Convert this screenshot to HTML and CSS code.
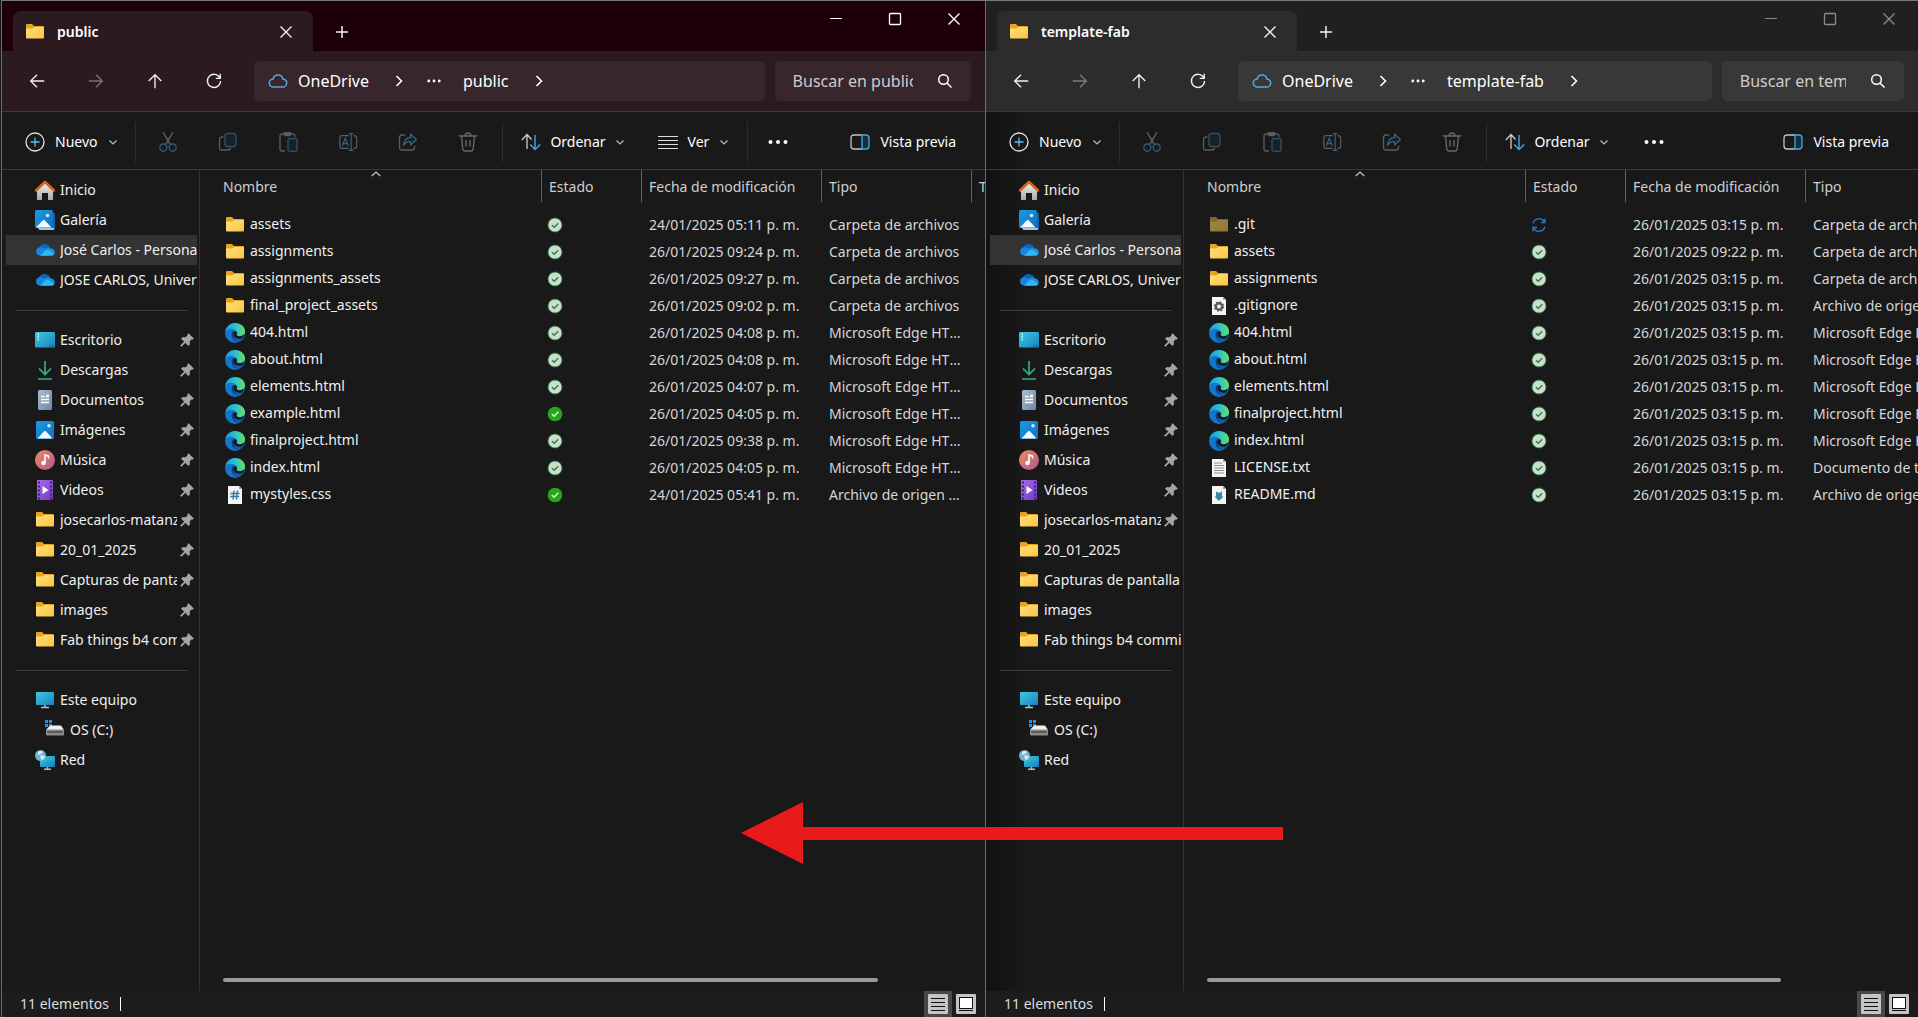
FILE: index.html
```
<!DOCTYPE html>
<html lang="es">
<head>
<meta charset="utf-8">
<title>Explorador de archivos</title>
<link rel="stylesheet" href="styles.css">
</head>
<body>
<svg class="sprite" width="0" height="0" aria-hidden="true">
<defs>
<linearGradient id="gFolder" x1="0" y1="0" x2="1" y2="1"><stop offset="0" stop-color="#ffe083"/><stop offset="1" stop-color="#fbc53c"/></linearGradient>
<linearGradient id="gBlue" x1="0" y1="0" x2="1" y2="1"><stop offset="0" stop-color="#1a9be0"/><stop offset="1" stop-color="#0d6fc4"/></linearGradient>
<linearGradient id="gDesk" x1="0" y1="0" x2="1" y2="1"><stop offset="0" stop-color="#3ccbe0"/><stop offset="1" stop-color="#1a7fc0"/></linearGradient>
<linearGradient id="gMusic" x1="0" y1="0" x2="1" y2="1"><stop offset="0" stop-color="#f08a5c"/><stop offset="1" stop-color="#b05a90"/></linearGradient>
<linearGradient id="gHome" x1="0" y1="0" x2="0" y2="1"><stop offset="0" stop-color="#f2f2f2"/><stop offset="1" stop-color="#a8a8a8"/></linearGradient>
<linearGradient id="gDoc" x1="0" y1="0" x2="1" y2="1"><stop offset="0" stop-color="#a9bdd2"/><stop offset="1" stop-color="#6f86a4"/></linearGradient>
<linearGradient id="gEdge" x1="0" y1="0" x2="1" y2="0"><stop offset="0" stop-color="#1b9de0"/><stop offset=".55" stop-color="#2fc4c8"/><stop offset="1" stop-color="#6be05a"/></linearGradient>
<linearGradient id="gVideo" x1="0" y1="0" x2="1" y2="1"><stop offset="0" stop-color="#a96bea"/><stop offset="1" stop-color="#6f3cc0"/></linearGradient>
</defs>
<symbol id="folder" viewBox="0 0 20 20"><path d="M1 3q0-1 1-1h5l2 2h9q1 0 1 1v3H1z" fill="#e8a41c"/><path d="M1 6.500h6.500L9.500 5H19v10.500q0 1-1 1H2q-1 0-1-1z" fill="url(#gFolder)"/></symbol>
<symbol id="home" viewBox="0 0 20 20"><path d="M2 9.500L10 2l8 7.500V20h-5v-7H7v7H2z" fill="url(#gHome)"/><path d="M1 10.500L10 2l9 8.500" fill="none" stroke="#d9641f" stroke-width="2.600" stroke-linejoin="round" stroke-linecap="round"/></symbol>
<symbol id="gallery" viewBox="0 0 20 20"><path d="M4 3h15q1 0 1 1v15q0 1-1 1H4z" fill="#1c5f9e"/><path d="M3 18h16v1q0 1-1 1H5q-1 0-2-2z" fill="#9fc7e6"/><rect width="18" height="18" rx="1.500" fill="url(#gBlue)"/><path d="M1 17.500l6.500-7q1.200-1 2.400 0l6.600 7z" fill="#f3f9ff"/><circle cx="12.500" cy="5.500" r="1.800" fill="#cfeaff"/></symbol>
<symbol id="onedrive" viewBox="0 0 20 20"><path d="M3.500 9C4.500 5 8 3.500 11 4.200c2 .4 3.500 1.700 4.200 3.500L10 13z" fill="#0f63b8"/><path d="M4.500 15.500A4.200 4.200 0 0 1 4.300 7.300c2.300-.3 4.200.7 5.700 2.200l5 6z" fill="#1686d9"/><path d="M8 10.500c2-3 5.500-3.700 7.600-2.300 2.600.3 4.200 2 4.200 4 0 1-.3 1.800-.8 2.300z" fill="#1490df"/><path d="M5 15.800l4.300-4.500c2-1.700 4.700-1.500 6.500 0l3.500 2.700c-.6 1.200-1.700 1.800-3 1.800z" fill="#35b4f2"/></symbol>
<symbol id="desktop" viewBox="0 0 20 20"><rect y="2" width="20" height="15.500" rx="1.200" fill="url(#gDesk)"/><path d="M2.500 4.500h1.500M2.500 7h1.500M2.500 9.500h1.500" stroke="#d7f6ff" stroke-width="1.300"/><path d="M14 16h1.500M17 16h1.500" stroke="#0b4a80"/></symbol>
<symbol id="download" viewBox="0 0 20 20"><path d="M10 1v13M4 8.500l6 6 6-6M3 19h14" fill="none" stroke="#2fb08a" stroke-width="1.700"/></symbol>
<symbol id="document" viewBox="0 0 20 20"><rect x="3" width="14" height="20" rx="1.500" fill="url(#gDoc)"/><path d="M6 6.500h4M6 9.500h8M6 12.500h8" stroke="#fff" stroke-width="1.500"/><path d="M11 4.500h3v3h-3z" fill="#eef4fa"/></symbol>
<symbol id="image" viewBox="0 0 20 20"><rect x="1" y="1" width="18" height="18" rx="1.500" fill="url(#gBlue)"/><path d="M2.500 18.500l6.300-7q1.200-1 2.400 0l6.300 7z" fill="#f3f9ff"/><circle cx="14" cy="5.800" r="1.700" fill="#cfeaff"/></symbol>
<symbol id="music" viewBox="0 0 20 20"><circle cx="10" cy="10" r="10" fill="url(#gMusic)"/><circle cx="8.500" cy="13" r="2.200" fill="#fff"/><path d="M10 13V5l3.500 1v2.500" fill="none" stroke="#fff" stroke-width="1.600"/></symbol>
<symbol id="video" viewBox="0 0 20 20"><rect x="2" width="16" height="20" rx="1" fill="url(#gVideo)"/><path d="M4 1.500v18M16 1.500v18" stroke="#3a1a78" stroke-width="1.800" stroke-dasharray="2 2"/><path d="M7.500 6v8l6-4z" fill="#fff"/></symbol>
<symbol id="pc" viewBox="0 0 20 20"><rect x="1" y="2" width="18" height="13" rx="1" fill="url(#gDesk)"/><path d="M10 15v2M6 17.500h8" stroke="#a9c3d6" stroke-width="1.500"/></symbol>
<symbol id="drive" viewBox="0 0 20 20"><path d="M0 0h3v3H0zM4 0h3v3H4zM0 4h3v3H0zM4 4h3v3H4z" fill="#2f8fd8"/><path d="M5 5.500h11l3 4.500H1z" fill="#f0f0f0"/><rect x="1" y="9.500" width="18" height="6" rx="1" fill="#8a8a8a"/><path d="M2.500 12h15" stroke="#4a4a4a" stroke-width="1.500"/></symbol>
<symbol id="network" viewBox="0 0 20 20"><rect x="5" y="6" width="15" height="11" rx="1" fill="url(#gDesk)"/><path d="M12.500 17v2M9 19.300h7" stroke="#a9c3d6" stroke-width="1.400"/><circle cx="5.500" cy="5.500" r="5.500" fill="#6fb2d4"/><path d="M3 2q3-2 5 0l-2 2-3 1zM5 6l3-1 2 2-2 3-2-1z" fill="#d4ecf6"/></symbol>
<symbol id="pin" viewBox="0 0 14 14"><path d="M8.500.5l5 5-1.300.9-.8-.2-2 2.300.2 3-1.200 1.200L5.300 9.600 1.500 13.500l-1-.9L4.400 8.700 1.400 5.600l1.200-1.200 3 .2 2.300-2-.3-.9z" fill="#a2a6ab" stroke="#a2a6ab" stroke-width=".6"/></symbol>
<symbol id="edge" viewBox="0 0 20 20"><circle cx="10" cy="10" r="10" fill="#1277cc"/><path d="M.3 8.500C1.200 3.500 5.200 0 10 0c6 0 10 4 10 8.200 0 3-2.200 5-5.200 5-2 0-3.500-.8-3.300-1.600.8-1 .8-2 .2-3C9.600 5 3 4.500.3 8.500z" fill="url(#gEdge)"/><path d="M7 9.500c-1.500 4.500 1.500 8.500 6 9.500 2.300-.4 4.300-2 5.300-3.800C14 17 9 15.500 8.200 11.500c-.2-1.500.5-2.800 1.800-3.300-1.200-.4-2.500.2-3 1.300z" fill="#0d3f88"/><path d="M8.200 11.500c-.2-1.800.8-3.200 2.200-3.300 1.600.5 2.100 2.200 1.100 3.500-.2.900 1.500 1.600 3.300 1.500 2 0 3.400-.8 4.400-2.200-.4 2-1 3.200-2 4.300-4 1.500-8-.3-9-3.800z" fill="#191919"/><path d="M8.500 13c1.800 3 5.800 4.300 9.500 2.500-1 1.400-3 2.800-5 3.200-2.500-1-4.200-3.200-4.500-5.700z" fill="#1464b4"/></symbol>
<symbol id="page" viewBox="0 0 20 20"><path d="M3 1h11l3 3v15H3z" fill="#f4f4f4"/><path d="M14 1v3h3z" fill="#a5a5a5"/></symbol>
<symbol id="css" viewBox="0 0 20 20"><use href="#page"/><path d="M9 5.500l-1 9M12.500 5.500l-1 9M5.500 8.500h9M5.200 11.500h9" stroke="#2c7ba6" stroke-width="1.400" fill="none"/></symbol>
<symbol id="gear" viewBox="0 0 20 20"><use href="#page"/><circle cx="10" cy="10.500" r="3.200" fill="none" stroke="#555a60" stroke-width="2.400"/><circle cx="10" cy="10.500" r="4.600" fill="none" stroke="#555a60" stroke-width="1.400" stroke-dasharray="1.800 1.800"/></symbol>
<symbol id="txt" viewBox="0 0 20 20"><use href="#page"/><path d="M5 5h8M5 7.500h10M5 10h10M5 12.500h10M5 15h10" stroke="#8a8f94" stroke-width="1"/></symbol>
<symbol id="md" viewBox="0 0 20 20"><use href="#page"/><path d="M7 6l1.500 1.500h3L13 6v5.500h1.500L10 16l-4.500-4.500H7z" fill="#3b85a8"/></symbol>
<symbol id="ok" viewBox="0 0 16 16"><circle cx="8" cy="8" r="7.500" fill="#2f6a3c"/><circle cx="8" cy="8" r="6.600" fill="#c6e0cb"/><path d="M5 8.200l2.200 2.100 4-4" fill="none" stroke="#3f6f4a" stroke-width="1.300"/></symbol>
<symbol id="kept" viewBox="0 0 16 16"><circle cx="8" cy="8" r="7.300" fill="#27a51c"/><path d="M4.800 8l2.300 2.200 4.200-4.400" fill="none" stroke="#d8ffd0" stroke-width="1.400"/></symbol>
<symbol id="sync" viewBox="0 0 16 16"><path d="M2 6.500A6.200 6.200 0 0 1 13.500 5M14 9.500A6.200 6.200 0 0 1 2.500 11M14 1.500V5.500H10M2 14.500v-4h4" fill="none" stroke="#2c78c4" stroke-width="1.300"/></symbol>
<symbol id="close" viewBox="0 0 14 14"><path d="M1.500 1.500l11 11M12.500 1.500l-11 11" stroke="currentColor" stroke-width="1.400"/></symbol>
<symbol id="plus" viewBox="0 0 14 14"><path d="M7 1v12M1 7h12" stroke="currentColor" stroke-width="1.500"/></symbol>
<symbol id="minimize" viewBox="0 0 14 14"><path d="M1 6.500h12" stroke="currentColor"/></symbol>
<symbol id="maximize" viewBox="0 0 14 14"><rect x="1.500" y="1.500" width="11" height="11" rx="1" fill="none" stroke="currentColor" stroke-width="1.300"/></symbol>
<symbol id="back" viewBox="0 0 20 20"><path d="M18 10H3M10 3l-7 7 7 7" fill="none" stroke="currentColor" stroke-width="1.500"/></symbol>
<symbol id="forward" viewBox="0 0 20 20"><path d="M2 10h15M10 3l7 7-7 7" fill="none" stroke="currentColor" stroke-width="1.500"/></symbol>
<symbol id="up" viewBox="0 0 20 20"><path d="M10 18V3M3 10l7-7 7 7" fill="none" stroke="currentColor" stroke-width="1.500"/></symbol>
<symbol id="refresh" viewBox="0 0 20 20"><path d="M16.500 6.500A7.300 7.300 0 1 0 17.300 10M17 2v5h-5" fill="none" stroke="currentColor" stroke-width="1.500"/></symbol>
<symbol id="cloud" viewBox="0 0 20 20"><path d="M5.500 16a4 4 0 0 1-.4-8C5.700 5.400 7.600 4 10 4s4.400 1.400 4.900 4a4 4 0 0 1-.4 8z" fill="none" stroke="#5aa7d8" stroke-width="1.500"/></symbol>
<symbol id="right" viewBox="0 0 12 12"><path d="M3.500 1l5 5-5 5" fill="none" stroke="currentColor" stroke-width="1.600"/></symbol>
<symbol id="down" viewBox="0 0 10 10"><path d="M1.500 3.500L5 7l3.500-3.500" fill="none" stroke="currentColor" stroke-width="1.200"/></symbol>
<symbol id="sortup" viewBox="0 0 10 6"><path d="M.8 5L5 1l4.200 4" fill="none" stroke="currentColor" stroke-width="1.100"/></symbol>
<symbol id="more" viewBox="0 0 20 20"><circle cx="2.500" cy="10" r="2" fill="currentColor"/><circle cx="10" cy="10" r="2" fill="currentColor"/><circle cx="17.500" cy="10" r="2" fill="currentColor"/></symbol>
<symbol id="search" viewBox="0 0 16 16"><circle cx="6.500" cy="6.500" r="4.800" fill="none" stroke="currentColor" stroke-width="1.500"/><path d="M10 10l4.500 4.500" stroke="currentColor" stroke-width="1.500"/></symbol>
<symbol id="new" viewBox="0 0 20 20"><circle cx="10" cy="10" r="9" fill="none" stroke="#e4e4e4" stroke-width="1.300"/><path d="M10 5.500v9M5.500 10h9" stroke="#4cc2ff" stroke-width="1.300"/></symbol>
<symbol id="cut" viewBox="0 0 20 20"><path d="M5 0l7.500 13M15 0L7.500 13" stroke="#6a6a6a" stroke-width="1.200"/><g fill="none" stroke="#2f5f7a" stroke-width="1.300"><circle cx="5.300" cy="15.500" r="3.500"/><circle cx="14.700" cy="15.500" r="3.500"/></g></symbol>
<symbol id="copy" viewBox="0 0 20 20"><path d="M5.500 5H4a2.500 2.500 0 0 0-2.500 2.500v8A2.500 2.500 0 0 0 4 18h6a2.500 2.500 0 0 0 2.500-2.500" fill="none" stroke="#5c5c5c" stroke-width="1.300"/><rect x="7" y="1.500" width="11" height="13" rx="2.500" fill="#16222a" stroke="#34505f" stroke-width="1.300"/></symbol>
<symbol id="paste" viewBox="0 0 20 20"><path d="M7 19H4q-2 0-2-2V4q0-2 2-2h11q2 0 2 2v1M6 2q0-1.500 1.500-1.500h4Q13 .500 13 2t-1.500 1.500h-4Q6 3.500 6 2z" fill="none" stroke="#5c5c5c" stroke-width="1.300"/><rect x="10" y="6.500" width="9" height="12.800" rx="1.500" fill="#16222a" stroke="#34505f" stroke-width="1.300"/></symbol>
<symbol id="rename" viewBox="0 0 22 20"><path d="M12 3H4Q2 3 2 5v10q0 2 2 2h8M17 3h1q2.500 0 2.500 2.500v9Q20.500 17 18 17h-1" fill="none" stroke="#5c5c5c" stroke-width="1.300"/><path d="M4.500 14.500L8 6l3.500 8.500M6 11.800h4M12 .7h5M12 19.300h5M14.500 1v18" fill="none" stroke="#3a6480" stroke-width="1.300"/></symbol>
<symbol id="share" viewBox="0 0 20 20"><path d="M7 3H4Q1.500 3 1.500 5.500v10Q1.500 18 4 18h10q2.500 0 2.500-2.500V14" fill="none" stroke="#5c5c5c" stroke-width="1.300"/><path d="M12.500 2l6 5.500-6 5.500v-3.300Q8 9.500 5.500 13.500 6 6 12.500 5.300z" fill="#16222a" stroke="#3a6480" stroke-width="1.200" stroke-linejoin="round"/></symbol>
<symbol id="trash" viewBox="0 0 20 20"><path d="M1 4h18M7 4q0-3 3-3t3 3M3.500 4l1.300 13q.2 2 2 2h6.400q1.800 0 2-2l1.300-13M8 8v6.500M12 8v6.500" fill="none" stroke="#6a6a6a" stroke-width="1.300"/></symbol>
<symbol id="sort" viewBox="0 0 20 20"><path d="M6 17V2.500M.8 8L6 2.500 10.500 7.500" fill="none" stroke="#cfcfcf" stroke-width="1.300"/><path d="M14 3v14.500M9.200 12.500l4.800 5 5.200-5" fill="none" stroke="#4aa8e0" stroke-width="1.400"/></symbol>
<symbol id="lines" viewBox="0 0 20 20"><path d="M0 4.500h20M0 8.500h20M0 12.500h20M0 16.500h20" stroke="#dcdcdc" stroke-width="1.200"/></symbol>
<symbol id="preview" viewBox="0 0 20 20"><path d="M12 3H4Q1 3 1 6v8q0 3 3 3h8" fill="none" stroke="#c4c4c4" stroke-width="1.300"/><path d="M12 3h4q3 0 3 3v8q0 3-3 3h-4z" fill="#12303f" stroke="#4aa8d8" stroke-width="1.300"/></symbol>
<symbol id="viewlist" viewBox="0 0 20 20"><rect width="20" height="20" rx="1" fill="#c4c4c4"/><path d="M3 4.500h14M3 8.500h14M3 12.500h14M3 16.500h14" stroke="#111"/></symbol>
<symbol id="viewthumb" viewBox="0 0 20 20"><rect width="20" height="20" rx="1" fill="#c4c4c4"/><rect x="3.500" y="3.500" width="13" height="11" fill="#fff" stroke="#111"/><path d="M3 16.500h14" stroke="#111"/></symbol>
</svg>

<main class="screen">
<section class="window window-active" aria-label="public">
<header class="titlebar">
<div class="tab"><svg class="icon"><use href="#folder"/></svg><span class="tab-title">public</span><button class="tab-btn" aria-label="Cerrar pestaña"><svg class="icon-s"><use href="#close"/></svg></button></div>
<button class="tab-new" aria-label="Nueva pestaña"><svg class="icon-s"><use href="#plus"/></svg></button>
<div class="caption">
<button aria-label="Minimizar"><svg class="icon-s"><use href="#minimize"/></svg></button>
<button aria-label="Maximizar"><svg class="icon-s"><use href="#maximize"/></svg></button>
<button aria-label="Cerrar"><svg class="icon-s"><use href="#close"/></svg></button>
</div>
</header>
<nav class="navbar">
<div class="nav-buttons">
<button aria-label="Atrás"><svg class="icon-n"><use href="#back"/></svg></button>
<button class="dim" aria-label="Adelante"><svg class="icon-n"><use href="#forward"/></svg></button>
<button aria-label="Subir"><svg class="icon-n"><use href="#up"/></svg></button>
<button aria-label="Actualizar"><svg class="icon-n"><use href="#refresh"/></svg></button>
</div>
<div class="address">
<svg class="icon"><use href="#cloud"/></svg><a href="#" class="crumb">OneDrive</a><svg class="icon-c"><use href="#right"/></svg><svg class="icon-d"><use href="#more"/></svg><a href="#" class="crumb">public</a><svg class="icon-c"><use href="#right"/></svg>
</div>
<label class="search"><input type="text" placeholder="Buscar en public" aria-label="Buscar en public"><svg class="icon-q"><use href="#search"/></svg></label>
</nav>
<div class="toolbar">
<button class="tool tool-new"><svg class="icon"><use href="#new"/></svg>Nuevo<svg class="icon-v"><use href="#down"/></svg></button>
<span class="rule"></span>
<div class="tool-icons">
<button aria-label="Cortar"><svg class="icon"><use href="#cut"/></svg></button>
<button aria-label="Copiar"><svg class="icon"><use href="#copy"/></svg></button>
<button aria-label="Pegar"><svg class="icon"><use href="#paste"/></svg></button>
<button aria-label="Cambiar nombre"><svg class="icon"><use href="#rename"/></svg></button>
<button aria-label="Compartir"><svg class="icon"><use href="#share"/></svg></button>
<button aria-label="Eliminar"><svg class="icon"><use href="#trash"/></svg></button>
</div>
<span class="rule"></span>
<button class="tool tool-sort"><svg class="icon"><use href="#sort"/></svg>Ordenar<svg class="icon-v"><use href="#down"/></svg></button>
<button class="tool tool-view"><svg class="icon"><use href="#lines"/></svg>Ver<svg class="icon-v"><use href="#down"/></svg></button>
<span class="rule"></span>
<button class="tool tool-more" aria-label="Ver más"><svg class="icon"><use href="#more"/></svg></button>
<button class="tool tool-preview"><svg class="icon"><use href="#preview"/></svg>Vista previa</button>
</div>
<div class="body">
<aside class="sidebar">
<ul>
<li><a href="#"><svg class="icon"><use href="#home"/></svg><span>Inicio</span></a></li>
<li><a href="#"><svg class="icon"><use href="#gallery"/></svg><span>Galería</span></a></li>
<li class="selected"><a href="#"><svg class="icon"><use href="#onedrive"/></svg><span>José Carlos - Personal</span></a></li>
<li><a href="#"><svg class="icon"><use href="#onedrive"/></svg><span>JOSE CARLOS, Universidad</span></a></li>
</ul>
<hr>
<ul>
<li><a href="#"><svg class="icon"><use href="#desktop"/></svg><span>Escritorio</span><svg class="icon-p"><use href="#pin"/></svg></a></li>
<li><a href="#"><svg class="icon"><use href="#download"/></svg><span>Descargas</span><svg class="icon-p"><use href="#pin"/></svg></a></li>
<li><a href="#"><svg class="icon"><use href="#document"/></svg><span>Documentos</span><svg class="icon-p"><use href="#pin"/></svg></a></li>
<li><a href="#"><svg class="icon"><use href="#image"/></svg><span>Imágenes</span><svg class="icon-p"><use href="#pin"/></svg></a></li>
<li><a href="#"><svg class="icon"><use href="#music"/></svg><span>Música</span><svg class="icon-p"><use href="#pin"/></svg></a></li>
<li><a href="#"><svg class="icon"><use href="#video"/></svg><span>Videos</span><svg class="icon-p"><use href="#pin"/></svg></a></li>
<li><a href="#"><svg class="icon"><use href="#folder"/></svg><span>josecarlos-matanzas</span><svg class="icon-p"><use href="#pin"/></svg></a></li>
<li><a href="#"><svg class="icon"><use href="#folder"/></svg><span>20_01_2025</span><svg class="icon-p"><use href="#pin"/></svg></a></li>
<li><a href="#"><svg class="icon"><use href="#folder"/></svg><span>Capturas de pantalla</span><svg class="icon-p"><use href="#pin"/></svg></a></li>
<li><a href="#"><svg class="icon"><use href="#folder"/></svg><span>images</span><svg class="icon-p"><use href="#pin"/></svg></a></li>
<li><a href="#"><svg class="icon"><use href="#folder"/></svg><span>Fab things b4 commit</span><svg class="icon-p"><use href="#pin"/></svg></a></li>
</ul>
<hr>
<ul>
<li><a href="#"><svg class="icon"><use href="#pc"/></svg><span>Este equipo</span></a></li>
<li class="child"><a href="#"><svg class="icon"><use href="#drive"/></svg><span>OS (C:)</span></a></li>
<li><a href="#"><svg class="icon"><use href="#network"/></svg><span>Red</span></a></li>
</ul>
</aside>
<div class="files">
<div class="table-clip">
<table>
<colgroup><col class="c-name"><col class="c-state"><col class="c-date"><col class="c-type"><col class="c-size"></colgroup>
<thead><tr><th><svg class="sorted"><use href="#sortup"/></svg><span>Nombre</span></th><th><span>Estado</span></th><th><span>Fecha de modificación</span></th><th><span>Tipo</span></th><th><span>Tamaño</span></th></tr></thead>
<tbody>
<tr><td><svg class="icon"><use href="#folder"/></svg>assets</td><td><svg class="icon-o"><use href="#ok"/></svg></td><td>24/01/2025 05:11 p. m.</td><td>Carpeta de archivos</td><td></td></tr>
<tr><td><svg class="icon"><use href="#folder"/></svg>assignments</td><td><svg class="icon-o"><use href="#ok"/></svg></td><td>26/01/2025 09:24 p. m.</td><td>Carpeta de archivos</td><td></td></tr>
<tr><td><svg class="icon"><use href="#folder"/></svg>assignments_assets</td><td><svg class="icon-o"><use href="#ok"/></svg></td><td>26/01/2025 09:27 p. m.</td><td>Carpeta de archivos</td><td></td></tr>
<tr><td><svg class="icon"><use href="#folder"/></svg>final_project_assets</td><td><svg class="icon-o"><use href="#ok"/></svg></td><td>26/01/2025 09:02 p. m.</td><td>Carpeta de archivos</td><td></td></tr>
<tr><td><svg class="icon"><use href="#edge"/></svg>404.html</td><td><svg class="icon-o"><use href="#ok"/></svg></td><td>26/01/2025 04:08 p. m.</td><td>Microsoft Edge HTML Document</td><td></td></tr>
<tr><td><svg class="icon"><use href="#edge"/></svg>about.html</td><td><svg class="icon-o"><use href="#ok"/></svg></td><td>26/01/2025 04:08 p. m.</td><td>Microsoft Edge HTML Document</td><td></td></tr>
<tr><td><svg class="icon"><use href="#edge"/></svg>elements.html</td><td><svg class="icon-o"><use href="#ok"/></svg></td><td>26/01/2025 04:07 p. m.</td><td>Microsoft Edge HTML Document</td><td></td></tr>
<tr><td><svg class="icon"><use href="#edge"/></svg>example.html</td><td><svg class="icon-o"><use href="#kept"/></svg></td><td>26/01/2025 04:05 p. m.</td><td>Microsoft Edge HTML Document</td><td></td></tr>
<tr><td><svg class="icon"><use href="#edge"/></svg>finalproject.html</td><td><svg class="icon-o"><use href="#ok"/></svg></td><td>26/01/2025 09:38 p. m.</td><td>Microsoft Edge HTML Document</td><td></td></tr>
<tr><td><svg class="icon"><use href="#edge"/></svg>index.html</td><td><svg class="icon-o"><use href="#ok"/></svg></td><td>26/01/2025 04:05 p. m.</td><td>Microsoft Edge HTML Document</td><td></td></tr>
<tr><td><svg class="icon"><use href="#css"/></svg>mystyles.css</td><td><svg class="icon-o"><use href="#kept"/></svg></td><td>24/01/2025 05:41 p. m.</td><td>Archivo de origen CSS</td><td></td></tr>
</tbody>
</table>
</div>
<div class="scroll"><div class="thumb"></div></div>
</div>
</div>
<footer class="status"><span class="count">11 elementos</span><button class="mode on" aria-label="Detalles"><svg class="icon"><use href="#viewlist"/></svg></button><button class="mode" aria-label="Miniaturas"><svg class="icon"><use href="#viewthumb"/></svg></button></footer>
</section>

<section class="window window-idle" aria-label="template-fab">
<header class="titlebar">
<div class="tab"><svg class="icon"><use href="#folder"/></svg><span class="tab-title">template-fab</span><button class="tab-btn" aria-label="Cerrar pestaña"><svg class="icon-s"><use href="#close"/></svg></button></div>
<button class="tab-new" aria-label="Nueva pestaña"><svg class="icon-s"><use href="#plus"/></svg></button>
<div class="caption">
<button aria-label="Minimizar"><svg class="icon-s"><use href="#minimize"/></svg></button>
<button aria-label="Maximizar"><svg class="icon-s"><use href="#maximize"/></svg></button>
<button aria-label="Cerrar"><svg class="icon-s"><use href="#close"/></svg></button>
</div>
</header>
<nav class="navbar">
<div class="nav-buttons">
<button aria-label="Atrás"><svg class="icon-n"><use href="#back"/></svg></button>
<button class="dim" aria-label="Adelante"><svg class="icon-n"><use href="#forward"/></svg></button>
<button aria-label="Subir"><svg class="icon-n"><use href="#up"/></svg></button>
<button aria-label="Actualizar"><svg class="icon-n"><use href="#refresh"/></svg></button>
</div>
<div class="address">
<svg class="icon"><use href="#cloud"/></svg><a href="#" class="crumb">OneDrive</a><svg class="icon-c"><use href="#right"/></svg><svg class="icon-d"><use href="#more"/></svg><a href="#" class="crumb">template-fab</a><svg class="icon-c"><use href="#right"/></svg>
</div>
<label class="search"><input type="text" placeholder="Buscar en template-fab" aria-label="Buscar en template-fab"><svg class="icon-q"><use href="#search"/></svg></label>
</nav>
<div class="toolbar">
<button class="tool tool-new"><svg class="icon"><use href="#new"/></svg>Nuevo<svg class="icon-v"><use href="#down"/></svg></button>
<span class="rule"></span>
<div class="tool-icons">
<button aria-label="Cortar"><svg class="icon"><use href="#cut"/></svg></button>
<button aria-label="Copiar"><svg class="icon"><use href="#copy"/></svg></button>
<button aria-label="Pegar"><svg class="icon"><use href="#paste"/></svg></button>
<button aria-label="Cambiar nombre"><svg class="icon"><use href="#rename"/></svg></button>
<button aria-label="Compartir"><svg class="icon"><use href="#share"/></svg></button>
<button aria-label="Eliminar"><svg class="icon"><use href="#trash"/></svg></button>
</div>
<span class="rule"></span>
<button class="tool tool-sort"><svg class="icon"><use href="#sort"/></svg>Ordenar<svg class="icon-v"><use href="#down"/></svg></button>
<button class="tool tool-more" aria-label="Ver más"><svg class="icon"><use href="#more"/></svg></button>
<button class="tool tool-preview"><svg class="icon"><use href="#preview"/></svg>Vista previa</button>
</div>
<div class="body">
<aside class="sidebar">
<ul>
<li><a href="#"><svg class="icon"><use href="#home"/></svg><span>Inicio</span></a></li>
<li><a href="#"><svg class="icon"><use href="#gallery"/></svg><span>Galería</span></a></li>
<li class="selected"><a href="#"><svg class="icon"><use href="#onedrive"/></svg><span>José Carlos - Personal</span></a></li>
<li><a href="#"><svg class="icon"><use href="#onedrive"/></svg><span>JOSE CARLOS, Universidad</span></a></li>
</ul>
<hr>
<ul>
<li><a href="#"><svg class="icon"><use href="#desktop"/></svg><span>Escritorio</span><svg class="icon-p"><use href="#pin"/></svg></a></li>
<li><a href="#"><svg class="icon"><use href="#download"/></svg><span>Descargas</span><svg class="icon-p"><use href="#pin"/></svg></a></li>
<li><a href="#"><svg class="icon"><use href="#document"/></svg><span>Documentos</span><svg class="icon-p"><use href="#pin"/></svg></a></li>
<li><a href="#"><svg class="icon"><use href="#image"/></svg><span>Imágenes</span><svg class="icon-p"><use href="#pin"/></svg></a></li>
<li><a href="#"><svg class="icon"><use href="#music"/></svg><span>Música</span><svg class="icon-p"><use href="#pin"/></svg></a></li>
<li><a href="#"><svg class="icon"><use href="#video"/></svg><span>Videos</span><svg class="icon-p"><use href="#pin"/></svg></a></li>
<li><a href="#"><svg class="icon"><use href="#folder"/></svg><span>josecarlos-matanzas</span><svg class="icon-p"><use href="#pin"/></svg></a></li>
<li><a href="#"><svg class="icon"><use href="#folder"/></svg><span>20_01_2025</span></a></li>
<li><a href="#"><svg class="icon"><use href="#folder"/></svg><span>Capturas de pantalla</span></a></li>
<li><a href="#"><svg class="icon"><use href="#folder"/></svg><span>images</span></a></li>
<li><a href="#"><svg class="icon"><use href="#folder"/></svg><span>Fab things b4 commit</span></a></li>
</ul>
<hr>
<ul>
<li><a href="#"><svg class="icon"><use href="#pc"/></svg><span>Este equipo</span></a></li>
<li class="child"><a href="#"><svg class="icon"><use href="#drive"/></svg><span>OS (C:)</span></a></li>
<li><a href="#"><svg class="icon"><use href="#network"/></svg><span>Red</span></a></li>
</ul>
</aside>
<div class="files">
<div class="table-clip">
<table>
<colgroup><col class="c-name"><col class="c-state"><col class="c-date"><col class="c-type"></colgroup>
<thead><tr><th><svg class="sorted"><use href="#sortup"/></svg><span>Nombre</span></th><th><span>Estado</span></th><th><span>Fecha de modificación</span></th><th><span>Tipo</span></th></tr></thead>
<tbody>
<tr><td><svg class="icon faded"><use href="#folder"/></svg>.git</td><td><svg class="icon-o"><use href="#sync"/></svg></td><td>26/01/2025 03:15 p. m.</td><td>Carpeta de archivos</td></tr>
<tr><td><svg class="icon"><use href="#folder"/></svg>assets</td><td><svg class="icon-o"><use href="#ok"/></svg></td><td>26/01/2025 09:22 p. m.</td><td>Carpeta de archivos</td></tr>
<tr><td><svg class="icon"><use href="#folder"/></svg>assignments</td><td><svg class="icon-o"><use href="#ok"/></svg></td><td>26/01/2025 03:15 p. m.</td><td>Carpeta de archivos</td></tr>
<tr><td><svg class="icon"><use href="#gear"/></svg>.gitignore</td><td><svg class="icon-o"><use href="#ok"/></svg></td><td>26/01/2025 03:15 p. m.</td><td>Archivo de origen Git</td></tr>
<tr><td><svg class="icon"><use href="#edge"/></svg>404.html</td><td><svg class="icon-o"><use href="#ok"/></svg></td><td>26/01/2025 03:15 p. m.</td><td>Microsoft Edge HTML Document</td></tr>
<tr><td><svg class="icon"><use href="#edge"/></svg>about.html</td><td><svg class="icon-o"><use href="#ok"/></svg></td><td>26/01/2025 03:15 p. m.</td><td>Microsoft Edge HTML Document</td></tr>
<tr><td><svg class="icon"><use href="#edge"/></svg>elements.html</td><td><svg class="icon-o"><use href="#ok"/></svg></td><td>26/01/2025 03:15 p. m.</td><td>Microsoft Edge HTML Document</td></tr>
<tr><td><svg class="icon"><use href="#edge"/></svg>finalproject.html</td><td><svg class="icon-o"><use href="#ok"/></svg></td><td>26/01/2025 03:15 p. m.</td><td>Microsoft Edge HTML Document</td></tr>
<tr><td><svg class="icon"><use href="#edge"/></svg>index.html</td><td><svg class="icon-o"><use href="#ok"/></svg></td><td>26/01/2025 03:15 p. m.</td><td>Microsoft Edge HTML Document</td></tr>
<tr><td><svg class="icon"><use href="#txt"/></svg>LICENSE.txt</td><td><svg class="icon-o"><use href="#ok"/></svg></td><td>26/01/2025 03:15 p. m.</td><td>Documento de texto</td></tr>
<tr><td><svg class="icon"><use href="#md"/></svg>README.md</td><td><svg class="icon-o"><use href="#ok"/></svg></td><td>26/01/2025 03:15 p. m.</td><td>Archivo de origen Markdown</td></tr>
</tbody>
</table>
</div>
<div class="scroll"><div class="thumb"></div></div>
</div>
</div>
<footer class="status"><span class="count">11 elementos</span><button class="mode on" aria-label="Detalles"><svg class="icon"><use href="#viewlist"/></svg></button><button class="mode" aria-label="Miniaturas"><svg class="icon"><use href="#viewthumb"/></svg></button></footer>
</section>
<svg class="arrow" viewBox="0 0 542 62" aria-hidden="true"><path d="M0 31L62 0v25h480v13H62v24z" fill="#e81a1c"/></svg>
</main>
</body>
</html>
```

FILE: styles.css
```
* { box-sizing: border-box; }

body {
  margin: 0;
  background: #191919;
  color: #f0f0f0;
  font: 14px/20px "Noto Sans", "Open Sans", sans-serif;
}

.sprite { display: block; }

button {
  display: flex;
  align-items: center;
  justify-content: center;
  padding: 0;
  border: 0;
  background: none;
  color: inherit;
  font: inherit;
}

a { color: inherit; text-decoration: none; }

svg { flex: none; }
.icon { width: 20px; height: 20px; }
.icon-s { width: 14px; height: 14px; }
.icon-n { width: 18px; height: 18px; }
.icon-c { width: 12px; height: 12px; }
.icon-d { width: 14px; height: 14px; }
.icon-q { width: 16px; height: 16px; }
.icon-v { width: 10px; height: 10px; }
.icon-p { width: 14px; height: 14px; }
.icon-o { width: 16px; height: 16px; }
.faded { opacity: .55; }

.screen {
  position: relative;
  display: grid;
  grid-template-columns: 984fr 933fr;
  min-height: 100vh;
  padding-left: 1px;
}

.window {
  display: flex;
  flex-direction: column;
  min-width: 0;
  overflow: hidden;
  border-top: 1px solid #777;
  border-left: 1px solid #6c6c6c;
}

.window-active { --title: #1e000a; --nav: #2b1b20; --field: #37262c; --caption: #fff; }
.window-idle {
  --title: #202020; --nav: #2c2c2c; --field: #383838; --caption: #8a8a8a;
  background: linear-gradient(90deg, #111, #191919 40px);
}

.titlebar {
  display: flex;
  height: 50px;
  padding-left: 11px;
  background: var(--title);
}

.tab {
  display: flex;
  align-items: center;
  width: 300px;
  margin-top: 10px;
  padding: 1px 12px 0;
  border-radius: 8px 8px 0 0;
  background: var(--nav);
}

.tab-title { flex: 1; margin-left: 12px; font-weight: 600; color: #fff; }
.tab-btn { width: 30px; height: 30px; }
.tab-new { width: 58px; margin-top: 12px; }
.caption { display: flex; margin-left: auto; color: var(--caption); }
.window-active .caption { padding-right: 2px; }
.caption button { width: 59px; height: 36px; }

.navbar {
  display: grid;
  grid-template-columns: 237px 13fr 5fr;
  column-gap: 10px;
  align-items: center;
  height: 60px;
  padding: 0 14px 0 5px;
  background: var(--nav);
}

.nav-buttons { display: flex; }
.nav-buttons button { width: 60px; height: 40px; }
.dim { opacity: .4; }

.address, .search {
  display: flex;
  align-items: center;
  min-width: 0;
  height: 40px;
  border-radius: 5px;
  background: var(--field);
  font-size: 16px;
  color: #fff;
}

.address { padding-left: 14px; }
.crumb { margin: 0 24px 0 10px; white-space: nowrap; }
.address .icon-d { margin-left: 22px; }
.address .icon-d + .crumb { margin-left: 22px; }

.search { gap: 24px; padding: 0 18px; }
.search input {
  flex: 1;
  min-width: 0;
  padding: 0;
  border: 0;
  outline: 0;
  background: none;
  color: #fff;
  font: inherit;
}
.search input::placeholder { color: #d0cccd; opacity: 1; }

.toolbar {
  display: flex;
  align-items: center;
  height: 59px;
  padding-top: 2px;
  border: solid #3a3a3a;
  border-width: 1px 0;
  color: #fff;
}

.tool { height: 40px; gap: 10px; }
.tool .icon-v { color: #bbb; }
.tool-new { justify-content: flex-start; width: 133px; padding-left: 23px; }
.rule { width: 1px; height: 40px; background: #2c2c2c; }
.tool-icons { display: flex; width: 366px; padding: 0 4px 0 2px; }
.tool-icons button { width: 60px; height: 40px; }
.tool-sort { gap: 9px; width: 137px; padding-left: 3px; }
.tool-view { width: 107px; }
.tool-more { width: 60px; }
.tool-preview { margin-left: auto; margin-right: 29px; }

.body { display: flex; flex: 1; min-height: 0; }

.sidebar {
  flex: none;
  width: 198px;
  padding: 5px 2px 0 4px;
  border-right: 1px solid #333;
}

.sidebar ul { margin: 0; padding: 0; list-style: none; }
.sidebar a {
  display: flex;
  align-items: center;
  gap: 5px;
  height: 30px;
  padding-left: 29px;
}
.sidebar span { flex: 1; min-width: 0; overflow: hidden; white-space: nowrap; }
.sidebar .icon-p { margin: 0 3px 0 -2px; }
.selected a { background: #333; }
.child a { padding-left: 39px; }
.sidebar hr { height: 1px; margin: 15px 9px 14px 10px; border: 0; background: #3c3c3c; }

.files { display: flex; flex: 1; flex-direction: column; min-width: 0; }
.table-clip { flex: 1; overflow: hidden; padding-left: 15px; }

table { width: 840px; table-layout: fixed; border-collapse: collapse; white-space: nowrap; }
.c-name { width: 326px; }
.c-state { width: 100px; }
.c-date { width: 180px; }
.c-type { width: 150px; }
.c-size { width: 84px; }
.window-idle table { width: 756px; }

th {
  height: 41px;
  padding: 0 0 9px;
  text-align: left;
  vertical-align: top;
  font-weight: 400;
  color: #cfcfcf;
}
th span { display: block; height: 32px; padding: 7px 7px 0; border-left: 1px solid #636363; }
th:first-child { position: relative; }
th:first-child span { border-left-color: transparent; }
.sorted { position: absolute; top: 1px; left: 48%; width: 10px; height: 6px; }

td {
  height: 27px;
  padding: 0 8px;
  overflow: hidden;
  text-overflow: ellipsis;
  color: #d6d6d6;
}
td:first-child { padding-left: 10px; color: #f0f0f0; }
td svg { vertical-align: middle; }
td .icon { margin-right: 5px; }
td .icon-o { display: block; margin-left: -2px; }

.scroll { display: flex; height: 16px; padding: 0 107px 0 23px; }
.window-idle .scroll { padding-right: 137px; }
.thumb { flex: 1; height: 4px; margin-top: 3px; border-radius: 2px; background: #9a9a9a; }

.status {
  display: flex;
  align-items: center;
  height: 26px;
  padding-right: 5px;
  background: #1c1c1c;
}
.count { margin: 0 auto 0 18px; padding-right: 11px; line-height: 14px; border-right: 1px solid #fff; color: #dcdcdc; }
.mode { width: 28px; height: 26px; }
.mode.on { background: #484848; }

.arrow { position: absolute; top: 802px; left: 741px; width: 542px; height: 62px; }
```
